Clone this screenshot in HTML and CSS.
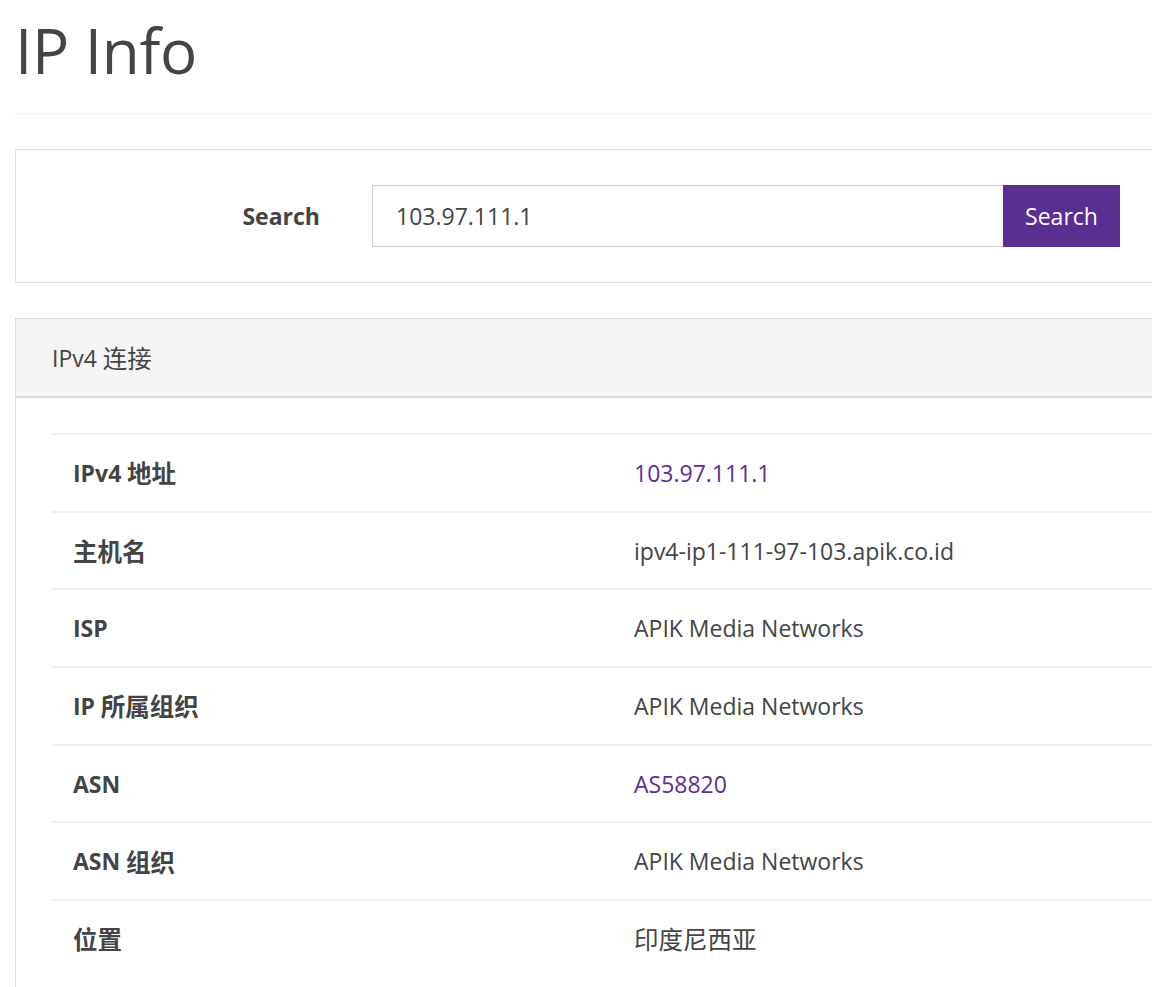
FILE: index.html
```html
<!DOCTYPE html>
<html lang="zh">
<head>
<meta charset="utf-8">
<title>IP Info</title>
<link rel="stylesheet" href="styles.css">
</head>
<body>
<div class="container">
  <h1 class="page-title">IP Info</h1>
  <hr class="divider">
  <div class="card search-card">
    <form class="search-form">
      <label class="search-label" for="q">Search</label>
      <div class="input-group">
        <input id="q" class="search-input" type="text" value="103.97.111.1">
        <button class="search-btn" type="button">Search</button>
      </div>
    </form>
  </div>
  <div class="card panel">
    <div class="panel-heading">IPv4 <span class="zh">连接</span></div>
    <div class="panel-body">
      <div class="info-table">
        <div class="cell label">IPv4 <span class="zh">地址</span></div><div class="cell value"><a href="#">103.97.111.1</a></div>
        <div class="cell label"><span class="zh">主机名</span></div><div class="cell value">ipv4-ip1-111-97-103.apik.co.id</div>
        <div class="cell label">ISP</div><div class="cell value">APIK Media Networks</div>
        <div class="cell label">IP <span class="zh">所属组织</span></div><div class="cell value">APIK Media Networks</div>
        <div class="cell label">ASN</div><div class="cell value"><a href="#">AS58820</a></div>
        <div class="cell label">ASN <span class="zh">组织</span></div><div class="cell value">APIK Media Networks</div>
        <div class="cell label"><span class="zh">位置</span></div><div class="cell value"><span class="zh">印度尼西亚</span></div>
      </div>
    </div>
  </div>
</div>
</body>
</html>
```
FILE: styles.css
```css
html, body {
  margin: 0;
  padding: 0;
  overflow: hidden;
  background: #fff;
}
body {
  font-family: "Open Sans", "Noto Sans CJK SC", sans-serif;
  font-size: 23px;
  color: #444;
}
.zh {
  font-family: "Noto Sans CJK SC", sans-serif;
  font-size: 24.5px;
}
.container {
  width: 1196px;
  padding-left: 15px;
}
.page-title {
  margin: 0;
  padding-top: 8px;
  font-size: 62px;
  font-weight: 400;
  line-height: 85px;
  color: #444;
  letter-spacing: -0.3px;
}
.divider {
  margin: 20px 0 35px;
  border: 0;
  border-top: 1px solid #eee;
}
.card {
  border: 1px solid #ddd;
  background: #fff;
}
.search-card {
  padding: 35px 0;
}
.search-form {
  display: flex;
  align-items: center;
  margin: 0;
}
.search-label {
  width: 304px;
  text-align: right;
  font-weight: 700;
  margin-right: 52px;
}
.input-group {
  display: flex;
  width: 748px;
  height: 62px;
}
.search-input {
  flex: 1;
  min-width: 0;
  border: 1px solid #ccc;
  border-right: 0;
  padding: 0 23px;
  font: inherit;
  color: #444;
  outline: none;
}
.search-btn {
  width: 117px;
  border: 0;
  background: #5b2e92;
  color: #fff;
  font: inherit;
  padding: 0;
}
.panel {
  margin-top: 35px;
}
.panel-heading {
  background: #f5f5f5;
  border-bottom: 2px solid #ddd;
  height: 77px;
  display: flex;
  align-items: center;
  gap: 0.25em;
  padding-left: 36px;
}
.panel-body {
  padding: 35px 36px 36px;
}
.info-table {
  display: grid;
  grid-template-columns: 561px 1fr;
}
.cell {
  height: 75.7px;
  display: flex;
  align-items: center;
  gap: 0.25em;
  padding-left: 21px;
  border-top: 2px solid #f0f0f0;
}
.label {
  font-weight: 700;
}
.value a {
  color: #5b2e92;
  text-decoration: none;
}
```
